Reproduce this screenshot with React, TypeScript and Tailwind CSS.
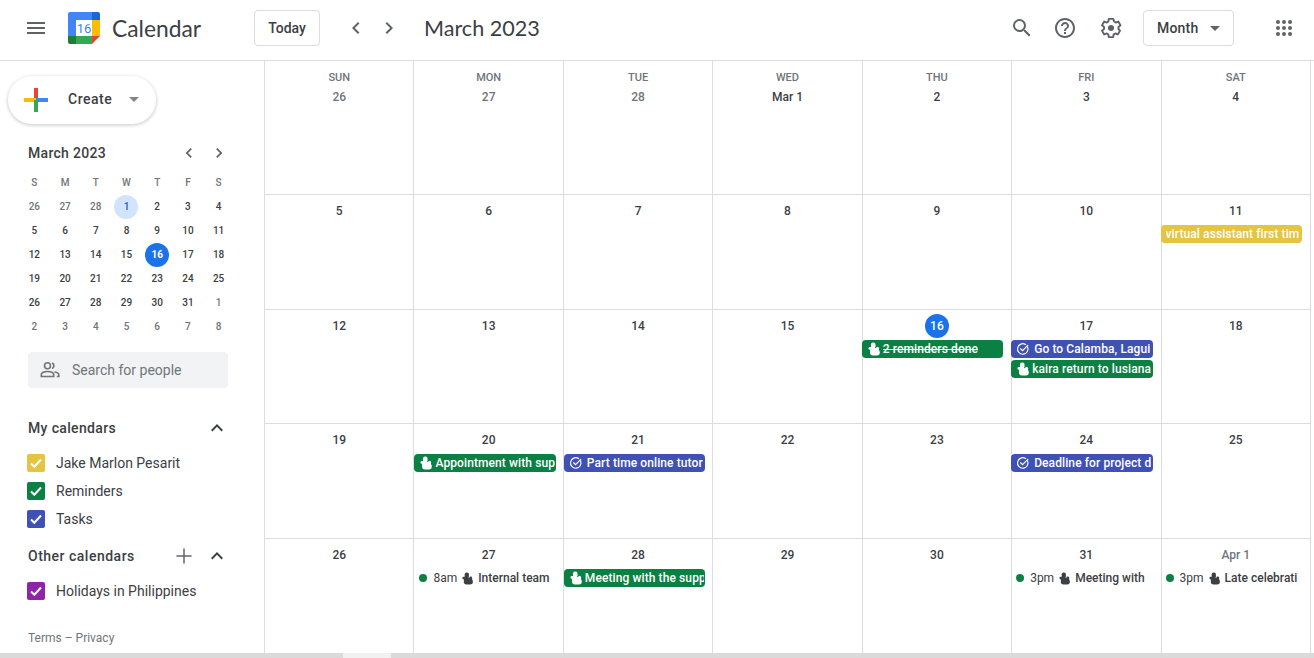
import React from 'react';
import { Plus } from 'lucide-react';

const roboto = { fontFamily: 'Roboto, sans-serif' };

const HandIcon = ({ className }: { className?: string }) => (
  <svg viewBox="0 0 14 14" className={className} fill="currentColor">
    <rect x="4" y="0.500" width="4.500" height="6" rx="2" />
    <rect x="1.500" y="5" width="4" height="2.800" rx="1.400" />
    <rect x="3" y="6" width="6.500" height="4" rx="1" />
    <rect x="9" y="4.800" width="3" height="5" rx="1.500" />
    <rect x="3" y="7.500" width="9.800" height="6" rx="3" />
  </svg>
);

const TaskIcon = ({ className }: { className?: string }) => (
  <svg viewBox="0 0 16 16" className={className} fill="none" stroke="currentColor" strokeWidth="1.300">
    <path d="M13.200 5.400A6 6 0 1 1 11 2.900" strokeLinecap="round" />
    <path d="M5.300 7.700l2.200 2.300 6-6.200" strokeLinecap="round" />
  </svg>
);

const MaterialIcon = ({ d, className }: { d: string; className?: string }) => (
  <svg viewBox="0 0 24 24" className={className} fill="currentColor">
    <path d={d} />
  </svg>
);

const CHEVRON_LEFT = 'M15.410 7.410L14 6l-6 6 6 6 1.410-1.410L10.830 12z';
const CHEVRON_RIGHT = 'M10 6L8.590 7.410 13.170 12l-4.580 4.590L10 18l6-6z';
const CHEVRON_UP = 'M7.410 15.410L12 10.830l4.590 4.580L18 14l-6-6-6 6z';
const SEARCH =
  'M15.500 14h-.79l-.28-.27A6.471 6.471 0 0 0 16 9.500 6.500 6.500 0 1 0 9.500 16c1.610 0 3.090-.59 4.230-1.570l.27.28v.79l5 4.990L20.490 19l-4.990-5zm-6 0C7.010 14 5 11.990 5 9.500S7.010 5 9.500 5 14 7.010 14 9.500 11.990 14 9.500 14z';
const HELP =
  'M11 18h2v-2h-2v2zm1-16C6.480 2 2 6.480 2 12s4.480 10 10 10 10-4.480 10-10S17.520 2 12 2zm0 18c-4.410 0-8-3.590-8-8s3.590-8 8-8 8 3.590 8 8-3.590 8-8 8zm0-14c-2.210 0-4 1.790-4 4h2c0-1.100.9-2 2-2s2 .9 2 2c0 2-3 1.750-3 5h2c0-2.250 3-2.500 3-5 0-2.210-1.790-4-4-4z';

const CalendarLogo = () => (
  <svg viewBox="0 0 32 32" className="w-8 h-8 shrink-0">
    <path d="M2 0h22v8H8v16H0V2a2 2 0 0 1 2-2z" fill="#4285f4" />
    <path d="M24 0h6a2 2 0 0 1 2 2v6h-8z" fill="#1967d2" />
    <rect x="24" y="8" width="8" height="16" fill="#fbbc04" />
    <path d="M8 24h16v8H8z" fill="#34a853" />
    <path d="M0 24h8v8H2a2 2 0 0 1-2-2z" fill="#188038" />
    <path d="M24 24h8l-8 8z" fill="#ea4335" />
    <rect x="8" y="8" width="16" height="16" fill="#fff" />
    <text x="16" y="21" textAnchor="middle" fontSize="13" fill="#4285f4" fontFamily="Roboto, sans-serif">16</text>
  </svg>
);

const CreatePlus = () => (
  <svg viewBox="0 0 24 24" className="w-6 h-6 shrink-0">
    <rect x="10" y="0" width="4" height="12" fill="#ea4335" />
    <rect x="0" y="10" width="12" height="4" fill="#fbbc04" />
    <rect x="12" y="10" width="12" height="4" fill="#4285f4" />
    <rect x="10" y="12" width="4" height="12" fill="#34a853" />
  </svg>
);

const GearIcon = () => (
  <svg viewBox="0 0 24 24" className="w-6 h-6" fill="none" stroke="#5f6368" strokeWidth="1.900" strokeLinejoin="round">
    <path d="M19.430 12.980c.04-.32.07-.64.07-.98s-.03-.66-.07-.98l2.110-1.650-2.230-3.860-2.490 1c-.52-.4-1.080-.73-1.690-.98L14.250 2.900h-4.500l-.38 2.630c-.61.25-1.170.59-1.690.98l-2.490-1-2.230 3.860 2.110 1.650c-.04.32-.07.65-.07.98s.03.66.07.98l-2.110 1.650 2.230 3.860 2.490-1c.52.4 1.080.73 1.690.98l.38 2.630h4.500l.38-2.630c.61-.25 1.170-.59 1.690-.98l2.490 1 2.230-3.860z" />
    <circle cx="12" cy="12" r="3" fill="#5f6368" stroke="none" />
  </svg>
);

const PeopleIcon = () => (
  <svg viewBox="0 0 20 20" className="w-5 h-5" fill="none" stroke="#70757a" strokeWidth="1.600">
    <circle cx="7.500" cy="5.800" r="3" />
    <path d="M1.300 16.500v-1.700c0-2.300 3.400-3.300 6.200-3.300s6.200 1 6.200 3.300v1.700z" />
    <path d="M12 3a3 3 0 0 1 0 5.600M14.500 11.800c2.300.5 4.300 1.400 4.300 3v1.700h-2" />
  </svg>
);

const Caret = ({ className }: { className: string }) => (
  <span className={`w-0 h-0 border-x-[5px] border-x-transparent border-t-[5px] ${className}`} />
);

const miniDays: { d: number; muted?: boolean; first?: boolean; today?: boolean }[] = [
  { d: 26, muted: true }, { d: 27, muted: true }, { d: 28, muted: true }, { d: 1, first: true }, { d: 2 }, { d: 3 }, { d: 4 },
  ...[5, 6, 7, 8, 9, 10, 11, 12, 13, 14, 15].map((d) => ({ d })),
  { d: 16, today: true },
  ...[17, 18, 19, 20, 21, 22, 23, 24, 25, 26, 27, 28, 29, 30, 31].map((d) => ({ d })),
  { d: 1, muted: true },
  ...[2, 3, 4, 5, 6, 7, 8].map((d) => ({ d, muted: true })),
];

const MiniCalendar = () => (
  <div className="mt-[17px] ml-[19px] w-[215px]">
    <div className="flex items-center h-6 pl-[9px]">
      <span className="flex-1 text-[14px] font-medium tracking-[0.3px] text-[#3c4043]">March 2023</span>
      <MaterialIcon d={CHEVRON_LEFT} className="w-5 h-5 text-[#5f6368] mr-[10px]" />
      <MaterialIcon d={CHEVRON_RIGHT} className="w-5 h-5 text-[#5f6368] mr-[5px]" />
    </div>
    <div className="grid grid-cols-7 mt-[6px] text-[10px] leading-6 text-center font-medium">
      {['S', 'M', 'T', 'W', 'T', 'F', 'S'].map((w, i) => (
        <div key={i} className="h-6 text-[#70757a]">{w}</div>
      ))}
      {miniDays.map((day, i) => (
        <div key={i} className="h-6 flex items-center justify-center">
          <span
            className={`w-6 h-6 rounded-full flex items-center justify-center ${
              day.today
                ? 'bg-[#1a73e8] text-white font-bold'
                : day.first
                  ? 'bg-[#d2e3fc] text-[#185abc]'
                  : day.muted
                    ? 'text-[#70757a]'
                    : 'text-[#3c4043]'
            }`}
          >
            {day.d}
          </span>
        </div>
      ))}
    </div>
  </div>
);

const CalendarRow = ({ color, label }: { color: string; label: string }) => (
  <div className="flex items-center h-7 pl-[27px]">
    <span className={`w-[18px] h-[18px] rounded-[2px] flex items-center justify-center ${color}`}>
      <svg viewBox="0 0 18 18" className="w-[18px] h-[18px]" fill="none" stroke="#fff" strokeWidth="2">
        <path d="M4 9.500l3.300 3.200L14 5.500" />
      </svg>
    </span>
    <span className="ml-[11px] text-[14px] text-[#3c4043]">{label}</span>
  </div>
);

type EventItem =
  | { kind: 'reminder'; text: string; strike?: boolean }
  | { kind: 'task'; text: string }
  | { kind: 'allday'; text: string }
  | { kind: 'timed'; time: string; text: string };

const EventChip = ({ ev }: { ev: EventItem }) => {
  if (ev.kind === 'timed') {
    return (
      <div className="h-[18px] mb-[2px] mr-[8px] flex items-center text-[12px] font-medium text-[#3c4043] whitespace-nowrap overflow-hidden">
        <span className="w-2 h-2 rounded-full bg-[#0b8043] ml-[5px] shrink-0" />
        <span className="ml-[6px] font-normal">{ev.time}</span>
        <HandIcon className="w-[13px] h-[13px] ml-[4px] shrink-0 text-[#3c4043]" />
        <span className="ml-[4px] overflow-hidden">{ev.text}</span>
      </div>
    );
  }
  const bg = ev.kind === 'task' ? 'bg-[#3f51b5]' : ev.kind === 'allday' ? 'bg-[#e4c441]' : 'bg-[#0b8043]';
  return (
    <div className={`h-[18px] mb-[2px] mr-[7px] rounded-[4px] flex items-center pl-[5px] pr-[1px] text-[12px] font-medium tracking-[0.1px] text-white whitespace-nowrap overflow-hidden ${bg}`}>
      {ev.kind === 'reminder' && <HandIcon className="w-[14px] h-[14px] mr-[2px] shrink-0" />}
      {ev.kind === 'task' && <TaskIcon className="w-[14px] h-[14px] mr-[4px] shrink-0" />}
      <span className={`overflow-hidden ${ev.kind === 'reminder' && ev.strike ? 'line-through' : ''}`}>{ev.text}</span>
    </div>
  );
};

type Cell = { label: string; muted?: boolean; today?: boolean; strong?: boolean; events?: EventItem[] };

const num = (n: number, events?: EventItem[]): Cell => ({ label: String(n), events });

const weeks: Cell[][] = [
  [
    { label: '26', muted: true }, { label: '27', muted: true }, { label: '28', muted: true },
    { label: 'Mar 1', strong: true }, num(2), num(3), num(4),
  ],
  [num(5), num(6), num(7), num(8), num(9), num(10), num(11, [{ kind: 'allday', text: 'virtual assistant first tim' }])],
  [
    num(12), num(13), num(14), num(15),
    { label: '16', today: true, events: [{ kind: 'reminder', text: '2 reminders done', strike: true }] },
    num(17, [
      { kind: 'task', text: 'Go to Calamba, Lagui' },
      { kind: 'reminder', text: 'kaira return to lusiana' },
    ]),
    num(18),
  ],
  [
    num(19),
    num(20, [{ kind: 'reminder', text: 'Appointment with sup' }]),
    num(21, [{ kind: 'task', text: 'Part time online tutor' }]),
    num(22), num(23),
    num(24, [{ kind: 'task', text: 'Deadline for project d' }]),
    num(25),
  ],
  [
    num(26),
    num(27, [{ kind: 'timed', time: '8am', text: 'Internal team' }]),
    num(28, [{ kind: 'reminder', text: 'Meeting with the supp' }]),
    num(29), num(30),
    num(31, [{ kind: 'timed', time: '3pm', text: 'Meeting with' }]),
    { label: 'Apr 1', muted: true, events: [{ kind: 'timed', time: '3pm', text: 'Late celebrati' }] },
  ],
];

const weekdays = ['SUN', 'MON', 'TUE', 'WED', 'THU', 'FRI', 'SAT'];

export default function App() {
  return (
    <div className="w-[1314px] h-[658px] overflow-hidden bg-white flex flex-col" style={roboto}>
      {/* Top bar */}
      <header className="h-[61px] shrink-0 border-b border-[#dadce0] flex items-center pb-[4px]">
        <div className="ml-[27px] w-[18px] flex flex-col gap-[3px]">
          <span className="h-[2px] bg-[#5f6368]" />
          <span className="h-[2px] bg-[#5f6368]" />
          <span className="h-[2px] bg-[#5f6368]" />
        </div>
        <div className="ml-[23px]"><CalendarLogo /></div>
        <span className="ml-[12px] w-[142px] text-[22.800px] text-[#3c4043]" style={{ fontFamily: 'Lato, sans-serif' }}>Calendar</span>
        <button className="w-[66px] h-9 border border-[#dadce0] rounded-[4px] text-[14px] font-medium text-[#3c4043]">Today</button>
        <MaterialIcon d={CHEVRON_LEFT} className="ml-[24px] w-6 h-6 text-[#5f6368]" />
        <MaterialIcon d={CHEVRON_RIGHT} className="ml-[9px] w-6 h-6 text-[#5f6368]" />
        <span className="ml-[23px] flex-1 text-[21.600px] text-[#3c4043]" style={{ fontFamily: 'Lato, sans-serif' }}>March 2023</span>
        <MaterialIcon d={SEARCH} className="w-6 h-6 text-[#5f6368]" />
        <MaterialIcon d={HELP} className="ml-[19px] w-6 h-6 text-[#5f6368]" />
        <span className="ml-[22px]"><GearIcon /></span>
        <button className="ml-[20px] w-[91px] h-9 border border-[#dadce0] rounded-[4px] flex items-center pl-[13px] text-[14px] font-medium tracking-[0.2px] text-[#3c4043]">
          Month
          <Caret className="ml-[12px] border-t-[#5f6368]" />
        </button>
        <div className="ml-[42px] mr-[22px] grid grid-cols-3 gap-[2px]">
          {Array.from({ length: 9 }).map((_, i) => (
            <span key={i} className="w-[4px] h-[4px] rounded-full bg-[#5f6368]" />
          ))}
        </div>
      </header>

      <div className="flex-1 flex min-h-0">
        {/* Sidebar */}
        <aside className="w-[265px] shrink-0 border-r border-[#dadce0] flex flex-col">
          <button className="mt-[15px] ml-2 w-[148px] h-12 rounded-full bg-white shadow-[0_1px_3px_1px_rgba(60,64,67,0.2)] flex items-center pl-4 pb-[1px] text-[14px] font-medium tracking-[0.5px] text-[#3c4043]">
            <CreatePlus />
            <span className="ml-[20px]">Create</span>
            <Caret className="ml-[17px] border-t-[#80868b]" />
          </button>

          <MiniCalendar />

          <div className="mt-[13px] ml-[28px] w-[200px] h-9 rounded-[4px] bg-[#f1f3f4] flex items-center pl-[12px] text-[14px] text-[#70757a]">
            <PeopleIcon />
            <span className="ml-[12px]">Search for people</span>
          </div>

          <div className="mt-[26px] flex items-center h-7 pl-[28px] pr-[35px] text-[14px] font-medium tracking-[0.35px] text-[#3c4043]">
            <span className="flex-1">My calendars</span>
            <MaterialIcon d={CHEVRON_UP} className="w-6 h-6 text-[#3c4043]" />
          </div>
          <div className="mt-[7px]">
            <CalendarRow color="bg-[#e4c441]" label="Jake Marlon Pesarit" />
            <CalendarRow color="bg-[#0b8043]" label="Reminders" />
            <CalendarRow color="bg-[#3f51b5]" label="Tasks" />
          </div>
          <div className="mt-[9px] flex items-center h-7 pl-[28px] pr-[35px] text-[14px] font-medium tracking-[0.5px] text-[#3c4043]">
            <span className="flex-1">Other calendars</span>
            <Plus className="w-6 h-6 text-[#5f6368] mr-[9px]" strokeWidth={1.5} />
            <MaterialIcon d={CHEVRON_UP} className="w-6 h-6 text-[#3c4043]" />
          </div>
          <div className="mt-[7px]">
            <CalendarRow color="bg-[#8e24aa]" label="Holidays in Philippines" />
          </div>
          <div className="mt-[24px] pl-[28px] text-[12px] text-[#70757a]">Terms – Privacy</div>
        </aside>

        {/* Month grid */}
        <main className="w-[1046px] grid grid-cols-7 grid-rows-[134px_115px_114px_115px_114px]">
          {weeks.map((week, w) =>
            week.map((cell, c) => (
              <div
                key={`${w}-${c}`}
                className={`flex flex-col min-w-0 border-[#dadce0] border-r ${w < 4 ? 'border-b' : ''}`}
              >
                {w === 0 && (
                  <div className="h-[15px] mt-[9px] text-center text-[11px] leading-[15px] font-medium text-[#70757a]">
                    {weekdays[c]}
                  </div>
                )}
                <div className={`flex justify-center ${w === 0 ? 'h-[24px]' : 'h-[30px] pt-[4px]'}`}>
                  <span
                    className={`h-6 flex items-center justify-center text-[12px] font-medium ${
                      cell.today
                        ? 'w-6 rounded-full bg-[#1a73e8] text-white font-bold'
                        : cell.muted
                          ? 'text-[#70757a]'
                          : 'text-[#3c4043]'
                    }`}
                  >
                    {cell.label}
                  </span>
                </div>
                {cell.events && (
                  <div className={c >= 4 ? '-ml-px mr-px' : ''}>
                    {cell.events.map((ev, i) => (
                      <EventChip key={i} ev={ev} />
                    ))}
                  </div>
                )}
              </div>
            )),
          )}
        </main>
      </div>

      {/* Horizontal scrollbar */}
      <div className="h-[5px] shrink-0 bg-[#dadada] flex">
        <span className="ml-[343px] w-[48px] h-full bg-[#f1f1f1]" />
      </div>
    </div>
  );
}
